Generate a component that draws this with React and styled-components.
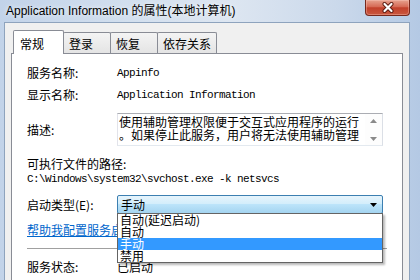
import React from 'react';
import styled, { createGlobalStyle } from 'styled-components';

const Global = createGlobalStyle`
  html, body { margin: 0; padding: 0; }
  body {
    width: 420px; height: 280px; overflow: hidden;
    font-family: "Noto Sans CJK SC", sans-serif;
    background: #c9d8ea;
  }
`;

const Window = styled.div`
  width: 420px; height: 280px; overflow: hidden;
  display: flex; flex-direction: column;
  background: linear-gradient(to right, #c2d3e9 0%, #d2dfee 30%, #dde6f1 55%, #cbd9eb 80%, #b4c9e4 100%);
`;

const TitleBar = styled.div`
  height: 22px; flex-shrink: 0;
  display: flex; align-items: flex-start;
`;

const Title = styled.div`
  flex: 1; padding-left: 6px; white-space: nowrap;
  font: 12px/22px "Liberation Sans", "Noto Sans CJK SC", sans-serif;
  color: #000;
  text-shadow: 0 0 5px rgba(255,255,255,0.9);
`;

const CloseBtn = styled.div`
  width: 45px; height: 16px; margin-right: 10px; box-sizing: border-box;
  border: 1px solid #76281c; border-top: none; border-radius: 0 0 4px 4px;
  background: linear-gradient(#e7a28f, #d66a55 45%, #c2402b 52%, #c9583f 100%);
  box-shadow: inset 0 0 0 1px rgba(255,210,200,0.35);
  display: flex; align-items: center; justify-content: center;
`;

const Frame = styled.div`
  flex: 1; min-height: 0; display: flex;
  padding: 0 10px 0 4px;
`;

const Client = styled.div`
  flex: 1; min-width: 0; display: flex; flex-direction: column;
  background: #f0f0f0;
  border: 1px solid #8ea3bd; border-bottom: none;
  padding: 7px 6px 0 6px;
`;

const TabStrip = styled.div`
  display: flex; align-items: flex-end;
  height: 24px; padding-left: 2px;
  margin-bottom: -1px; position: relative; z-index: 1;
`;

const Tab = styled.div`
  box-sizing: border-box;
  width: ${p => p.$w}px;
  height: ${p => (p.$active ? 24 : 21)}px;
  margin-bottom: ${p => (p.$active ? 0 : 1)}px;
  margin-left: ${p => (p.$first ? 0 : -1)}px;
  border: 1px solid #898c95; border-bottom: none;
  border-radius: 2px 2px 0 0;
  background: ${p => (p.$active ? '#fff' : 'linear-gradient(#f4f4f4, #e4e4e4)')};
  padding: ${p => (p.$active ? '5px 0 0 6px' : '3px 0 0 5px')};
  font-size: 12px; line-height: 16px; color: #000; white-space: nowrap;
  position: relative; z-index: ${p => (p.$active ? 2 : 1)};
`;

const Panel = styled.div`
  flex: 1; min-height: 0;
  background: #fff;
  border: 1px solid #898c95; border-bottom: none;
  padding: 9px 15px 0 15px;
  display: flex; flex-direction: column;
`;

const Row = styled.div`
  display: flex; align-items: center; flex-shrink: 0;
  height: ${p => p.$h || 20}px;
  margin-top: ${p => p.$mt || 0}px;
`;

const Label = styled.div`
  width: 90px; flex-shrink: 0;
  font-size: 12px; line-height: 16px; color: #000; white-space: nowrap;
`;

const Mono = styled.div`
  font-family: "Liberation Mono", monospace;
  font-size: 11px; letter-spacing: -0.6px; color: #000; white-space: nowrap;
`;

const DescBox = styled.div`
  box-sizing: border-box; width: 266px; height: 33px;
  display: flex;
  border: 1px solid; border-color: #abadb3 #dbdfe6 #e3e9ef #e2e3ea;
  background: #fff;
`;

const DescText = styled.div`
  flex: 1; padding: 1px 0 0 1px;
  font-size: 12px; line-height: 13px; color: #000; white-space: nowrap; overflow: hidden;
`;

const ScrollBar = styled.div`
  width: 17px; display: flex; flex-direction: column; justify-content: space-between;
  align-items: center; padding: 5px 0 4px;
  background: #fdfdfd;
`;

const Combo = styled.div`
  position: relative; box-sizing: border-box;
  width: 266px; height: 19px;
  border: 1px solid #3c7fb1; border-radius: 2px;
  background: linear-gradient(#e6f4fc, #d4eefb 45%, #bce4fa 50%, #a4d4f0);
  display: flex; align-items: center; justify-content: space-between;
  padding: 0 5px 0 3px;
  font-size: 12px; color: #000;
`;

const List = styled.div`
  position: absolute; left: -1px; top: 17px; z-index: 5;
  box-sizing: border-box; width: 266px;
  border: 1px solid #646464;
  background: #fff;
  box-shadow: 2px 2px 2px rgba(0,0,0,0.28);
`;

const Item = styled.div`
  height: 12px; line-height: 12px; padding-left: 2px;
  font-size: 12px; white-space: nowrap;
  background: ${p => (p.$sel ? '#3399ff' : 'transparent')};
  color: ${p => (p.$sel ? '#fff' : '#000')};
`;

const Link = styled.div`
  font-size: 12px; line-height: 14px; white-space: nowrap;
  color: #0066cc; text-decoration: underline;
`;

const Separator = styled.div`
  height: 1px; flex-shrink: 0; margin-top: 11px;
  background: #a0a0a0;
`;

const Value = styled.div`
  font-size: 12px; line-height: 16px; color: #000; white-space: nowrap;
`;

const Arrow = ({ up, color = '#8a8a8a' }) => (
  <svg width="7" height="4" viewBox="0 0 7 4">
    <path d={up ? 'M0 4 L3.5 0 L7 4 Z' : 'M0 0 L7 0 L3.5 4 Z'} fill={color} />
  </svg>
);

export default function App() {
  return (
    <Window>
      <Global />
      <TitleBar>
        <Title>Application Information 的属性(本地计算机)</Title>
        <CloseBtn>
          <svg width="14" height="11" viewBox="0 0 14 11">
            <path d="M3.5 2 L10.5 9 M10.5 2 L3.5 9" stroke="#5a1a10" strokeWidth="4" strokeLinecap="round" />
            <path d="M3.5 2 L10.5 9 M10.5 2 L3.5 9" stroke="#fff" strokeWidth="2.2" strokeLinecap="round" />
          </svg>
        </CloseBtn>
      </TitleBar>
      <Frame>
        <Client>
          <TabStrip>
            <Tab $w={51} $active $first>常规</Tab>
            <Tab $w={48}>登录</Tab>
            <Tab $w={48}>恢复</Tab>
            <Tab $w={60}>依存关系</Tab>
          </TabStrip>
          <Panel>
            <Row>
              <Label>服务名称:</Label>
              <Mono>Appinfo</Mono>
            </Row>
            <Row $mt={2}>
              <Label>显示名称:</Label>
              <Mono>Application Information</Mono>
            </Row>
            <Row $mt={8} $h={33}>
              <Label>描述:</Label>
              <DescBox>
                <DescText>
                  使用辅助管理权限便于交互式应用程序的运行<br />
                  。如果停止此服务，用户将无法使用辅助管理
                </DescText>
                <ScrollBar>
                  <Arrow up />
                  <Arrow />
                </ScrollBar>
              </DescBox>
            </Row>
            <Row $mt={10} $h={16}>
              <Label style={{ width: 'auto' }}>可执行文件的路径:</Label>
            </Row>
            <Row $h={14}>
              <Mono>C:\Windows\system32\svchost.exe -k netsvcs</Mono>
            </Row>
            <Row $mt={9} $h={19}>
              <Label>启动类型(E):</Label>
              <Combo>
                <span>手动</span>
                <Arrow color="#000" />
                <List>
                  <Item>自动(延迟启动)</Item>
                  <Item>自动</Item>
                  <Item $sel>手动</Item>
                  <Item>禁用</Item>
                </List>
              </Combo>
            </Row>
            <Row $mt={9} $h={14}>
              <Link>帮助我配置服务启动选项。</Link>
            </Row>
            <Separator />
            <Row $mt={10} $h={16}>
              <Label>服务状态:</Label>
              <Value>已启动</Value>
            </Row>
          </Panel>
        </Client>
      </Frame>
    </Window>
  );
}
